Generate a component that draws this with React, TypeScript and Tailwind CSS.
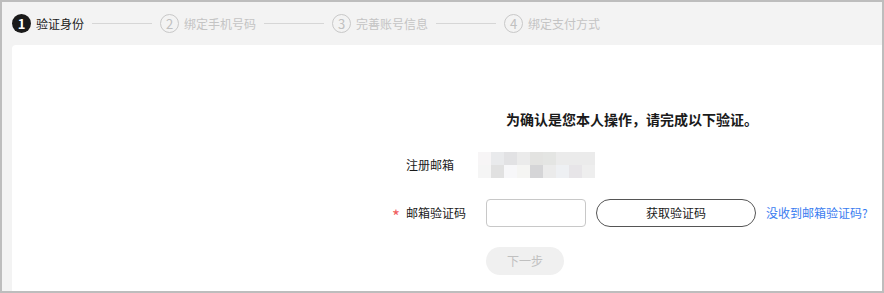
import type { FC } from "react";

const steps = ["验证身份", "绑定手机号码", "完善账号信息", "绑定支付方式"];

const mosaic = [
  ["#f7f5f6", "#e9eaec", "#e2e2e4", "#ebebeb", "#e3e3e1", "#e4e5e3", "#ebebeb", "#ebebeb", "#ebebeb"],
  ["#f5f5f5", "#e1e1e1", "#f7f7f9", "#f5f5f3", "#d5d5d7", "#ebebeb", "#eef0f3", "#e7e5e8", "#eeeeee"],
];

const App: FC = () => {
  return (
    <div
      className="w-[884px] h-[293px] border-2 border-[#bdbdbd] bg-[#f3f3f3] flex flex-col text-[12px] text-[#1a1a1a]"
      style={{ fontFamily: '"Noto Sans CJK SC", "Noto Sans", sans-serif' }}
    >
      {/* 步骤条 */}
      <div className="h-[43px] flex items-center pl-[10px] shrink-0">
        {steps.map((s, i) => (
          <div className="flex items-center" key={s}>
            {i > 0 && <div className="w-[60px] h-px bg-[#d6d6d6] mx-[8px]" />}
            {i === 0 ? (
              <div className="w-[19px] h-[19px] rounded-full bg-[#1a1a1a] text-white flex items-center justify-center text-[13px] font-bold leading-none">
                1
              </div>
            ) : (
              <div className="w-[19px] h-[19px] rounded-full border border-[#c8c8c8] text-[#c0c0c0] flex items-center justify-center text-[13px] leading-none">
                {i + 1}
              </div>
            )}
            <span className={"ml-[5px] leading-none " + (i === 0 ? "text-[#1a1a1a]" : "text-[#c4c4c4]")}>{s}</span>
          </div>
        ))}
      </div>

      {/* 卡片 */}
      <div className="flex-1 bg-white ml-[10px] rounded-tl-[4px] flex flex-col pt-[64px]">
        <h2 className="ml-[494px] text-[14px] font-bold leading-[20px]">为确认是您本人操作，请完成以下验证。</h2>

        <div className="flex items-center ml-[394px] mt-[23px] h-[26px]">
          <label className="w-[72px]">注册邮箱</label>
          <div className="flex flex-col">
            {mosaic.map((row, r) => (
              <div className="flex" key={r}>
                {row.map((c, k) => (
                  <div className="w-[13px] h-[13px]" key={k} style={{ backgroundColor: c }} />
                ))}
              </div>
            ))}
          </div>
        </div>

        <div className="flex items-center ml-[394px] mt-[21px] h-[28px]">
          <label className="w-[80px] relative">
            <span className="absolute -left-[14px] top-[3px] text-[17px] leading-none text-[#f06060]">*</span>
            邮箱验证码
          </label>
          <input className="w-[100px] h-[28px] border border-[#c8c8c8] rounded-[4px] outline-none px-2" type="text" />
          <button className="ml-[10px] w-[160px] h-[28px] rounded-full border border-[#555] text-[12px]" type="button">
            获取验证码
          </button>
          <a className="ml-[10px] text-[#3a7cf0]" href="#">
            没收到邮箱验证码?
          </a>
        </div>

        <div className="ml-[474px] mt-[20px]">
          <button className="w-[78px] h-[28px] rounded-full bg-[#f0f0f0] text-[#c0c0c0] text-[12px]" disabled type="button">
            下一步
          </button>
        </div>
      </div>
    </div>
  );
};

export default App;
